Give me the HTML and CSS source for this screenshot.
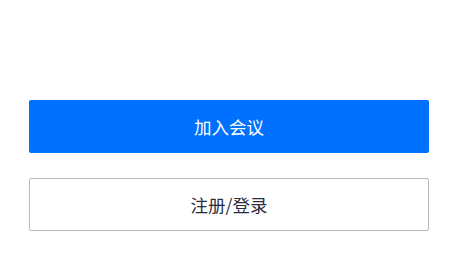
FILE: index.html
```html
<!DOCTYPE html>
<html lang="zh">
<head>
<meta charset="utf-8">
<link rel="stylesheet" href="styles.css">
</head>
<body>
<div class="actions">
  <button class="btn btn-primary">加入会议</button>
  <button class="btn btn-outline">注册/登录</button>
</div>
</body>
</html>
```
FILE: styles.css
```css
html, body {
  margin: 0;
  padding: 0;
  background: #ffffff;
}
body {
  font-family: "Noto Sans CJK SC", "Noto Sans", sans-serif;
}
.actions {
  display: flex;
  flex-direction: column;
  gap: 25px;
  padding: 100px 20px 0 29px;
  width: 400px;
}
.btn {
  box-sizing: border-box;
  width: 400px;
  height: 53px;
  border-radius: 2px;
  font-family: "Noto Sans CJK SC", sans-serif;
  font-size: 17.5px;
  display: flex;
  align-items: center;
  justify-content: center;
  padding: 0;
  cursor: pointer;
}
.btn-primary {
  background: #0070ff;
  color: #ffffff;
  border: none;
}
.btn-outline {
  background: #ffffff;
  color: #2b2c3d;
  border: 1px solid #b8b8c2;
}
```
